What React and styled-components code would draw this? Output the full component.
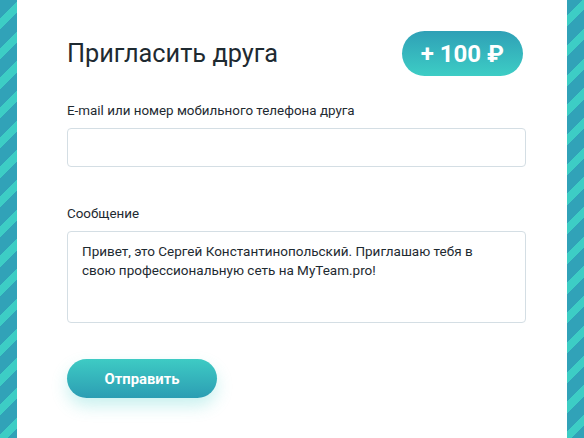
import React from "react";
import styled, { createGlobalStyle } from "styled-components";

const GlobalStyle = createGlobalStyle`
  html, body {
    margin: 0;
    height: 100%;
  }
  body {
    font-family: Roboto, "Noto Sans", "Liberation Sans", sans-serif;
    background: repeating-linear-gradient(
      135deg,
      #31a2b8 0px,
      #31a2b8 13px,
      #3dcdc5 13px,
      #3dcdc5 21px
    );
  }
`;

const Page = styled.div`
  display: flex;
  justify-content: center;
  min-height: 100vh;
`;

const Panel = styled.div`
  width: 550px;
  background: #ffffff;
  box-sizing: border-box;
  padding: 31px 41px 40px 50px;
  display: flex;
  flex-direction: column;
`;

const Header = styled.div`
  display: flex;
  justify-content: space-between;
  align-items: center;
  padding-right: 3px;
  margin-bottom: 26px;
  h1 {
    margin: 0;
    font-size: 25.3px;
    font-weight: 400;
    color: #1e2a31;
  }
`;

const Badge = styled.div`
  height: 45px;
  padding: 0 19px;
  border-radius: 23px;
  display: flex;
  align-items: center;
  color: #fff;
  font-size: 24px;
  font-weight: 700;
  background: linear-gradient(180deg, #2fa0b6 0%, #3dcdc5 100%);
`;

const Field = styled.div`
  display: flex;
  flex-direction: column;
  margin-bottom: ${({ $gap }) => $gap}px;
  label {
    font-size: 13.4px;
    line-height: 18px;
    color: #1e2a31;
    margin-bottom: 8px;
  }
`;

const Input = styled.input`
  height: 39px;
  box-sizing: border-box;
  border: 1px solid #d4dee4;
  border-radius: 4px;
  padding: 0 14px;
  font: inherit;
  font-size: 13.5px;
  outline: none;
`;

const TextArea = styled.textarea`
  height: 92px;
  box-sizing: border-box;
  border: 1px solid #d4dee4;
  border-radius: 4px;
  padding: 10px 30px 10px 14px;
  font-family: inherit;
  font-size: 13.5px;
  line-height: 19px;
  color: #1e2a31;
  resize: none;
  outline: none;
`;

const SendButton = styled.button`
  align-self: flex-start;
  width: 150px;
  height: 39px;
  border: none;
  border-radius: 20px;
  color: #fff;
  font-family: inherit;
  font-size: 14.8px;
  font-weight: 700;
  background: linear-gradient(180deg, #3ecbc4 0%, #2c9db3 100%);
  box-shadow: 0 8px 16px rgba(62, 203, 196, 0.28);
  cursor: pointer;
`;

export default function App() {
  return (
    <>
      <GlobalStyle />
      <Page>
        <Panel>
          <Header>
            <h1>Пригласить друга</h1>
            <Badge>+ 100 ₽</Badge>
          </Header>
          <Field $gap={38}>
            <label>E-mail или номер мобильного телефона друга</label>
            <Input type="text" />
          </Field>
          <Field $gap={36}>
            <label>Сообщение</label>
            <TextArea
              defaultValue="Привет, это Сергей Константинопольский. Приглашаю тебя в свою профессиональную сеть на MyTeam.pro!"
            />
          </Field>
          <SendButton>Отправить</SendButton>
        </Panel>
      </Page>
    </>
  );
}
